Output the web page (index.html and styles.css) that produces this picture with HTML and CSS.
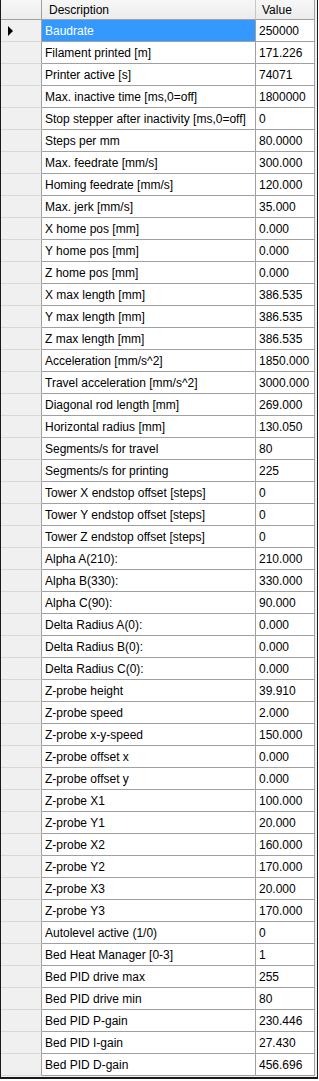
FILE: index.html
```html
<!DOCTYPE html>
<html>
<head>
<meta charset="utf-8">
<link rel="stylesheet" href="styles.css">
</head>
<body>
<div class="frame">
  <div class="grid">
    <div class="row head">
      <div class="cell rh"></div>
      <div class="cell hd desc">Description</div>
      <div class="cell hd val">Value</div>
    </div>
    <div class="row current">
      <div class="cell rh"><svg class="arrow" width="6" height="10" viewBox="0 0 6 10"><path d="M0 0 L5 5 L0 10 Z" fill="#000"/></svg></div>
      <div class="cell desc sel">Baudrate</div>
      <div class="cell val">250000</div>
    </div>
    <div class="row"><div class="cell rh"></div><div class="cell desc">Filament printed [m]</div><div class="cell val">171.226</div></div>
    <div class="row"><div class="cell rh"></div><div class="cell desc">Printer active [s]</div><div class="cell val">74071</div></div>
    <div class="row"><div class="cell rh"></div><div class="cell desc">Max. inactive time [ms,0=off]</div><div class="cell val">1800000</div></div>
    <div class="row"><div class="cell rh"></div><div class="cell desc">Stop stepper after inactivity [ms,0=off]</div><div class="cell val">0</div></div>
    <div class="row"><div class="cell rh"></div><div class="cell desc">Steps per mm</div><div class="cell val">80.0000</div></div>
    <div class="row"><div class="cell rh"></div><div class="cell desc">Max. feedrate [mm/s]</div><div class="cell val">300.000</div></div>
    <div class="row"><div class="cell rh"></div><div class="cell desc">Homing feedrate [mm/s]</div><div class="cell val">120.000</div></div>
    <div class="row"><div class="cell rh"></div><div class="cell desc">Max. jerk [mm/s]</div><div class="cell val">35.000</div></div>
    <div class="row"><div class="cell rh"></div><div class="cell desc">X home pos [mm]</div><div class="cell val">0.000</div></div>
    <div class="row"><div class="cell rh"></div><div class="cell desc">Y home pos [mm]</div><div class="cell val">0.000</div></div>
    <div class="row"><div class="cell rh"></div><div class="cell desc">Z home pos [mm]</div><div class="cell val">0.000</div></div>
    <div class="row"><div class="cell rh"></div><div class="cell desc">X max length [mm]</div><div class="cell val">386.535</div></div>
    <div class="row"><div class="cell rh"></div><div class="cell desc">Y max length [mm]</div><div class="cell val">386.535</div></div>
    <div class="row"><div class="cell rh"></div><div class="cell desc">Z max length [mm]</div><div class="cell val">386.535</div></div>
    <div class="row"><div class="cell rh"></div><div class="cell desc">Acceleration [mm/s^2]</div><div class="cell val">1850.000</div></div>
    <div class="row"><div class="cell rh"></div><div class="cell desc">Travel acceleration [mm/s^2]</div><div class="cell val">3000.000</div></div>
    <div class="row"><div class="cell rh"></div><div class="cell desc">Diagonal rod length [mm]</div><div class="cell val">269.000</div></div>
    <div class="row"><div class="cell rh"></div><div class="cell desc">Horizontal radius [mm]</div><div class="cell val">130.050</div></div>
    <div class="row"><div class="cell rh"></div><div class="cell desc">Segments/s for travel</div><div class="cell val">80</div></div>
    <div class="row"><div class="cell rh"></div><div class="cell desc">Segments/s for printing</div><div class="cell val">225</div></div>
    <div class="row"><div class="cell rh"></div><div class="cell desc">Tower X endstop offset [steps]</div><div class="cell val">0</div></div>
    <div class="row"><div class="cell rh"></div><div class="cell desc">Tower Y endstop offset [steps]</div><div class="cell val">0</div></div>
    <div class="row"><div class="cell rh"></div><div class="cell desc">Tower Z endstop offset [steps]</div><div class="cell val">0</div></div>
    <div class="row"><div class="cell rh"></div><div class="cell desc">Alpha A(210):</div><div class="cell val">210.000</div></div>
    <div class="row"><div class="cell rh"></div><div class="cell desc">Alpha B(330):</div><div class="cell val">330.000</div></div>
    <div class="row"><div class="cell rh"></div><div class="cell desc">Alpha C(90):</div><div class="cell val">90.000</div></div>
    <div class="row"><div class="cell rh"></div><div class="cell desc">Delta Radius A(0):</div><div class="cell val">0.000</div></div>
    <div class="row"><div class="cell rh"></div><div class="cell desc">Delta Radius B(0):</div><div class="cell val">0.000</div></div>
    <div class="row"><div class="cell rh"></div><div class="cell desc">Delta Radius C(0):</div><div class="cell val">0.000</div></div>
    <div class="row"><div class="cell rh"></div><div class="cell desc">Z-probe height</div><div class="cell val">39.910</div></div>
    <div class="row"><div class="cell rh"></div><div class="cell desc">Z-probe speed</div><div class="cell val">2.000</div></div>
    <div class="row"><div class="cell rh"></div><div class="cell desc">Z-probe x-y-speed</div><div class="cell val">150.000</div></div>
    <div class="row"><div class="cell rh"></div><div class="cell desc">Z-probe offset x</div><div class="cell val">0.000</div></div>
    <div class="row"><div class="cell rh"></div><div class="cell desc">Z-probe offset y</div><div class="cell val">0.000</div></div>
    <div class="row"><div class="cell rh"></div><div class="cell desc">Z-probe X1</div><div class="cell val">100.000</div></div>
    <div class="row"><div class="cell rh"></div><div class="cell desc">Z-probe Y1</div><div class="cell val">20.000</div></div>
    <div class="row"><div class="cell rh"></div><div class="cell desc">Z-probe X2</div><div class="cell val">160.000</div></div>
    <div class="row"><div class="cell rh"></div><div class="cell desc">Z-probe Y2</div><div class="cell val">170.000</div></div>
    <div class="row"><div class="cell rh"></div><div class="cell desc">Z-probe X3</div><div class="cell val">20.000</div></div>
    <div class="row"><div class="cell rh"></div><div class="cell desc">Z-probe Y3</div><div class="cell val">170.000</div></div>
    <div class="row"><div class="cell rh"></div><div class="cell desc">Autolevel active (1/0)</div><div class="cell val">0</div></div>
    <div class="row"><div class="cell rh"></div><div class="cell desc">Bed Heat Manager [0-3]</div><div class="cell val">1</div></div>
    <div class="row"><div class="cell rh"></div><div class="cell desc">Bed PID drive max</div><div class="cell val">255</div></div>
    <div class="row"><div class="cell rh"></div><div class="cell desc">Bed PID drive min</div><div class="cell val">80</div></div>
    <div class="row"><div class="cell rh"></div><div class="cell desc">Bed PID P-gain</div><div class="cell val">230.446</div></div>
    <div class="row"><div class="cell rh"></div><div class="cell desc">Bed PID I-gain</div><div class="cell val">27.430</div></div>
    <div class="row"><div class="cell rh"></div><div class="cell desc">Bed PID D-gain</div><div class="cell val">456.696</div></div>
  </div>
  <div class="vbar"></div>
</div>
</body>
</html>
```
FILE: styles.css
```css
html, body {
  margin: 0;
  padding: 0;
  background: #ffffff;
}
body {
  font-family: "Liberation Sans", Arial, sans-serif;
  font-size: 12px;
  color: #000;
}
.frame {
  width: 318px;
  display: flex;
  border-left: 1px solid #1a1a1a;
  border-right: 1px solid #1a1a1a;
  border-bottom: 2px solid #1a1a1a;
  padding-bottom: 1px;
  background: #f0f0f0;
  box-sizing: border-box;
}
.grid {
  width: 313px;
  display: flex;
  flex-direction: column;
}
.vbar {
  flex: 1;
  background: #f0f0f0;
  border-left: 1px solid #a0a0a0;
}
.row {
  display: grid;
  grid-template-columns: 41px 214px 58px;
  height: 22px;
}
.row.head {
  height: 20px;
}
.cell {
  box-sizing: border-box;
  border-right: 1px solid #a0a0a0;
  border-bottom: 1px solid #a0a0a0;
  background: #ffffff;
  display: flex;
  align-items: center;
  padding-left: 3px;
  white-space: nowrap;
  overflow: hidden;
}
.cell.val {
  border-right: none;
}
.cell.rh {
  background: #f0f0f0;
  border-bottom-color: #d8d8d8;
  border-right-color: #a0a0a0;
  padding-left: 7px;
}
.head .cell {
  background: linear-gradient(#f7f7f7, #ececec);
  border-bottom-color: #a0a0a0;
  border-right-color: #c8c8c8;
}
.head .cell.rh {
  border-right-color: #a0a0a0;
}
.cell.hd.desc {
  padding-left: 7px;
}
.cell.hd.val {
  padding-left: 6px;
}
.cell.sel {
  background: #3399ff;
  color: #ffffff;
}
.arrow {
  display: block;
}
```
